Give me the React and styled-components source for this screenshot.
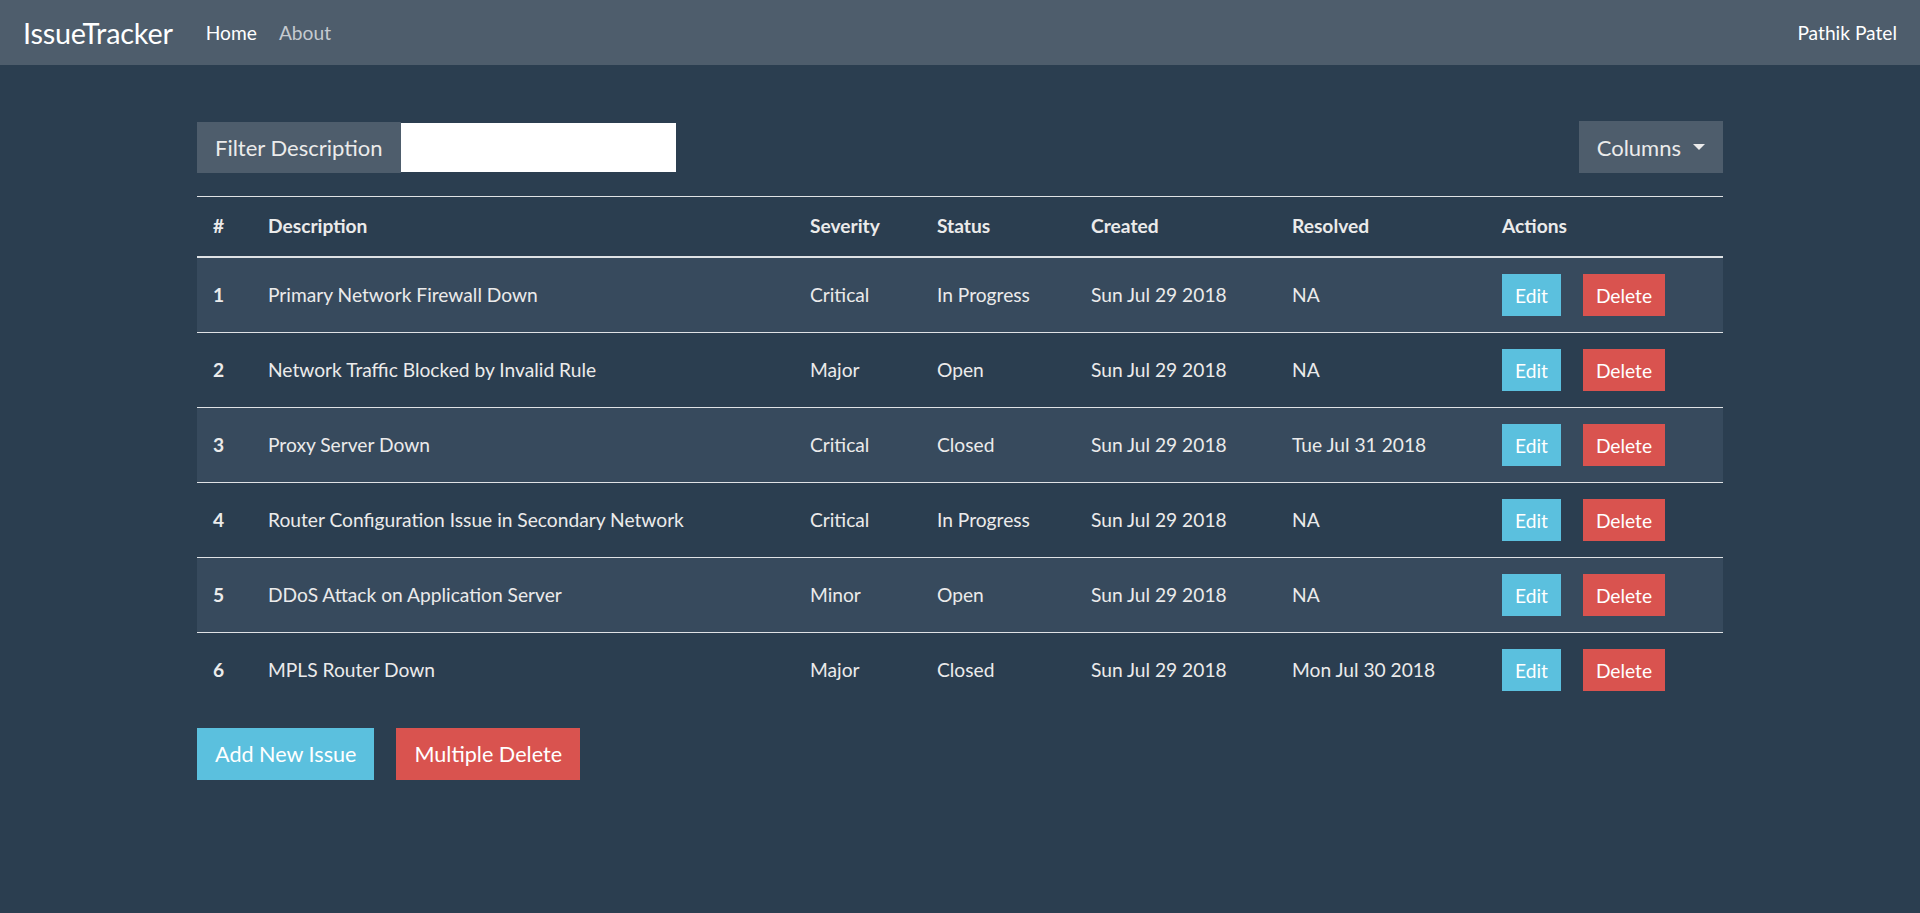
import styled, { createGlobalStyle } from 'styled-components'

const GlobalStyle = createGlobalStyle`
  html, body {
    margin: 0;
    padding: 0;
    background: #2b3e50;
    color: #ebebeb;
    font-family: Lato, 'Open Sans', sans-serif;
    font-size: 19.2px;
  }
`

const Navbar = styled.nav`
  display: flex;
  align-items: center;
  height: 65px;
  padding: 0 23px;
  background: #4e5d6c;
`

const Brand = styled.a`
  font-size: 28.8px;
  color: #fff;
  margin-right: 22px;
  letter-spacing: -0.2px;
`

const NavLink = styled.a`
  font-size: 19.2px;
  padding: 0 11px;
  color: ${p => (p.active ? '#ffffff' : '#c5cad0')};
`

const NavRight = styled.div`
  margin-left: auto;
  font-size: 19.2px;
  color: #fff;
`

const Main = styled.main`
  width: 1526px;
  margin: 56px auto 0;
`

const Toolbar = styled.div`
  display: flex;
  justify-content: space-between;
  align-items: center;
  margin-bottom: 23px;
`

const InputGroup = styled.div`
  display: flex;
  height: 51px;
`

const Addon = styled.span`
  display: flex;
  align-items: center;
  padding: 0 18px;
  background: #4e5d6c;
  font-size: 22px;
  color: #ebebeb;
`

const FilterInput = styled.input`
  box-sizing: border-box;
  width: 275px;
  border: none;
  margin: 1px 0;
  padding: 0 12px;
  background: #fff;
  outline: none;
`

const DropButton = styled.button`
  display: flex;
  align-items: center;
  gap: 12px;
  height: 52px;
  padding: 0 18px;
  border: none;
  background: #4e5d6c;
  color: #ebebeb;
  font-family: inherit;
  font-size: 22px;
`

const Caret = styled.span`
  width: 0;
  height: 0;
  border-left: 6px solid transparent;
  border-right: 6px solid transparent;
  border-top: 6px solid #ebebeb;
`

const Table = styled.table`
  width: 100%;
  table-layout: fixed;
  border-collapse: collapse;
  border-top: 1px solid #dfe2e5;
`

const Th = styled.th`
  text-align: left;
  font-weight: 700;
  padding: 18px 16px 20px;
  line-height: 21px;
  border-bottom: 2px solid #dfe2e5;
`

const Row = styled.tr`
  background: ${p => (p.striped ? '#374a5d' : 'transparent')};
  & + & {
    border-top: 1px solid #dfe2e5;
  }
`

const Td = styled.td`
  padding: 16px;
  line-height: 22px;
  vertical-align: middle;
  font-weight: ${p => (p.bold ? 700 : 400)};
  white-space: nowrap;
`

const SmallBtn = styled.button`
  height: 42px;
  padding: 0 13px;
  border: none;
  vertical-align: middle;
  font-family: inherit;
  font-size: 19.2px;
  color: #fff;
  background: ${p => (p.danger ? '#d9534f' : '#5bc0de')};
  & + & {
    margin-left: 22px;
  }
`

const Footer = styled.div`
  display: flex;
  gap: 22px;
  margin-top: 21px;
`

const BigBtn = styled.button`
  height: 52px;
  padding: 0 18px;
  border: none;
  font-family: inherit;
  font-size: 21.6px;
  color: #fff;
  background: ${p => (p.danger ? '#d9534f' : '#5bc0de')};
`

const widths = [55, 542, 127, 154, 201, 210, 237]
const heads = ['#', 'Description', 'Severity', 'Status', 'Created', 'Resolved', 'Actions']

const issues = [
  [1, 'Primary Network Firewall Down', 'Critical', 'In Progress', 'Sun Jul 29 2018', 'NA'],
  [2, 'Network Traffic Blocked by Invalid Rule', 'Major', 'Open', 'Sun Jul 29 2018', 'NA'],
  [3, 'Proxy Server Down', 'Critical', 'Closed', 'Sun Jul 29 2018', 'Tue Jul 31 2018'],
  [4, 'Router Configuration Issue in Secondary Network', 'Critical', 'In Progress', 'Sun Jul 29 2018', 'NA'],
  [5, 'DDoS Attack on Application Server', 'Minor', 'Open', 'Sun Jul 29 2018', 'NA'],
  [6, 'MPLS Router Down', 'Major', 'Closed', 'Sun Jul 29 2018', 'Mon Jul 30 2018']
]

export default function App () {
  return (
    <>
      <GlobalStyle />
      <Navbar>
        <Brand>IssueTracker</Brand>
        <NavLink active>Home</NavLink>
        <NavLink>About</NavLink>
        <NavRight>Pathik Patel</NavRight>
      </Navbar>
      <Main>
        <Toolbar>
          <InputGroup>
            <Addon>Filter Description</Addon>
            <FilterInput type='text' />
          </InputGroup>
          <DropButton>
            Columns <Caret />
          </DropButton>
        </Toolbar>
        <Table>
          <colgroup>
            {widths.map((w, i) => <col key={i} style={{ width: w }} />)}
          </colgroup>
          <thead>
            <tr>
              {heads.map(h => <Th key={h}>{h}</Th>)}
            </tr>
          </thead>
          <tbody>
            {issues.map((row, i) => (
              <Row key={row[0]} striped={i % 2 === 0}>
                <Td bold>{row[0]}</Td>
                <Td>{row[1]}</Td>
                <Td>{row[2]}</Td>
                <Td>{row[3]}</Td>
                <Td>{row[4]}</Td>
                <Td>{row[5]}</Td>
                <Td>
                  <SmallBtn>Edit</SmallBtn>
                  <SmallBtn danger>Delete</SmallBtn>
                </Td>
              </Row>
            ))}
          </tbody>
        </Table>
        <Footer>
          <BigBtn>Add New Issue</BigBtn>
          <BigBtn danger>Multiple Delete</BigBtn>
        </Footer>
      </Main>
    </>
  )
}
